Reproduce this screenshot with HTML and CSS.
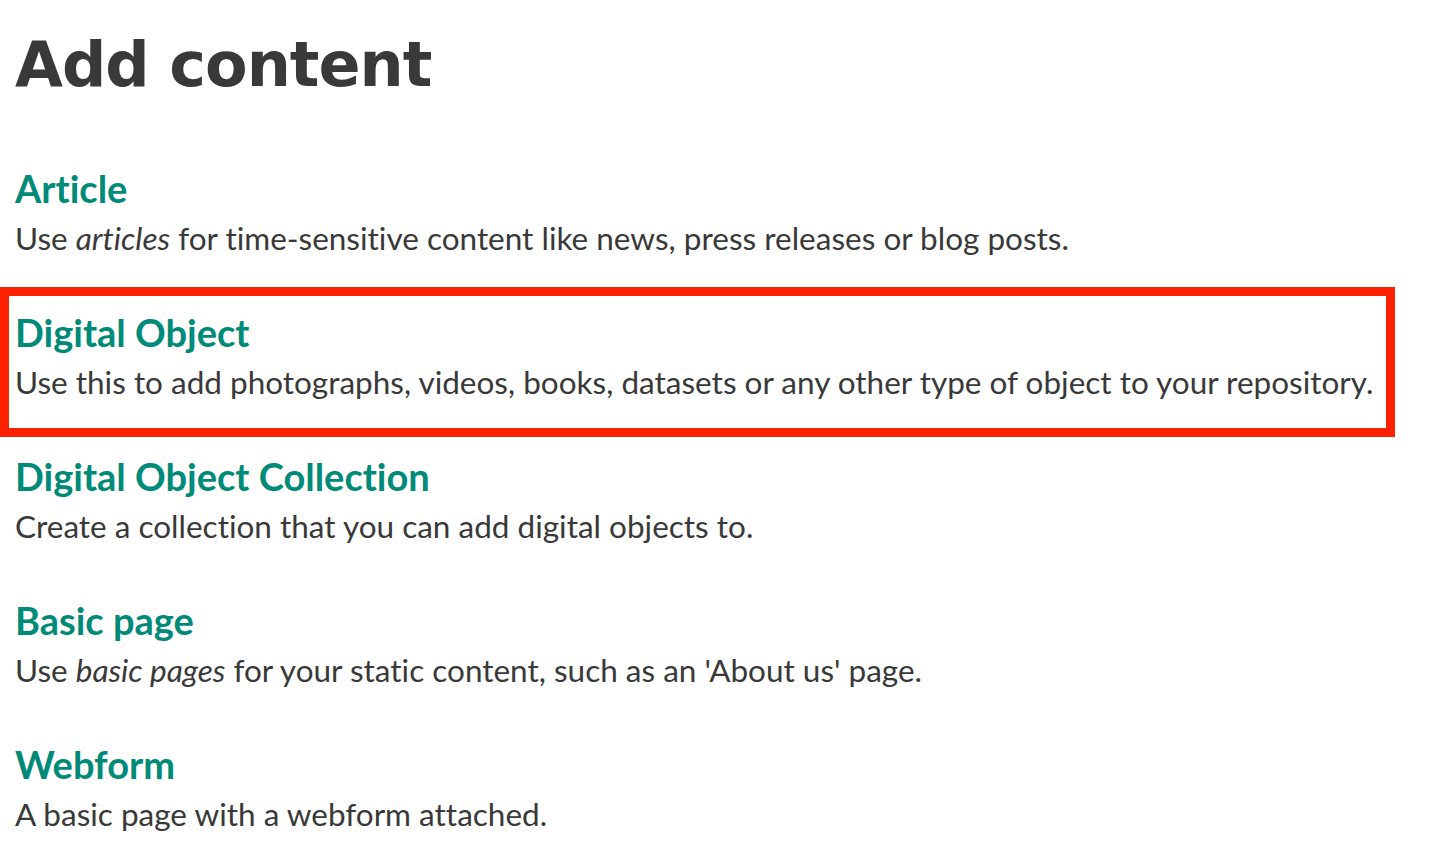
FILE: index.html
```html
<!DOCTYPE html>
<html lang="en">
<head>
<meta charset="utf-8">
<title>Add content</title>
<link rel="stylesheet" href="styles.css">
</head>
<body>
<main class="page">
  <h1 class="page-title">Add content</h1>
  <ul class="type-list">
    <li class="type-item">
      <a class="type-name" href="#">Article</a>
      <p class="type-desc">Use <em>articles</em> for time-sensitive content like news, press releases or blog posts.</p>
    </li>
    <li class="type-item highlighted">
      <a class="type-name" href="#">Digital Object</a>
      <p class="type-desc">Use this to add photographs, videos, books, datasets or any other type of object to your repository.</p>
      <span class="annotation-box"></span>
    </li>
    <li class="type-item">
      <a class="type-name" href="#">Digital Object Collection</a>
      <p class="type-desc">Create a collection that you can add digital objects to.</p>
    </li>
    <li class="type-item">
      <a class="type-name" href="#">Basic page</a>
      <p class="type-desc">Use <em>basic pages</em> for your static content, such as an 'About us' page.</p>
    </li>
    <li class="type-item">
      <a class="type-name" href="#">Webform</a>
      <p class="type-desc">A basic page with a webform attached.</p>
    </li>
  </ul>
</main>
</body>
</html>
```

FILE: styles.css
```css
html, body {
  margin: 0;
  padding: 0;
  background: #ffffff;
}

body {
  font-family: "Lato", "Liberation Sans", sans-serif;
  color: #393939;
  font-variant-ligatures: none;
}

.page {
  padding: 25px 15px 0 15px;
}

.page-title {
  margin: 0;
  font-family: "DejaVu Sans", "Inter", sans-serif;
  font-weight: 700;
  font-size: 62px;
  line-height: 80px;
  color: #393939;
  letter-spacing: -1px;
}

.type-list {
  list-style: none;
  margin: 0;
  padding: 0;
  margin-top: 59px;
}

.type-item {
  position: relative;
  height: 144px;
}

.type-name {
  display: block;
  font-weight: 700;
  font-size: 38px;
  line-height: 48px;
  color: #008a78;
  text-decoration: none;
}

.type-desc {
  margin: 2px 0 0 0;
  font-size: 31.5px;
  line-height: 48px;
  color: #393939;
}

.type-desc em {
  font-style: italic;
}

.annotation-box {
  position: absolute;
  left: -15px;
  top: -21px;
  width: 1395px;
  height: 150px;
  box-sizing: border-box;
  border: 9px solid #ff2200;
  pointer-events: none;
}
```
